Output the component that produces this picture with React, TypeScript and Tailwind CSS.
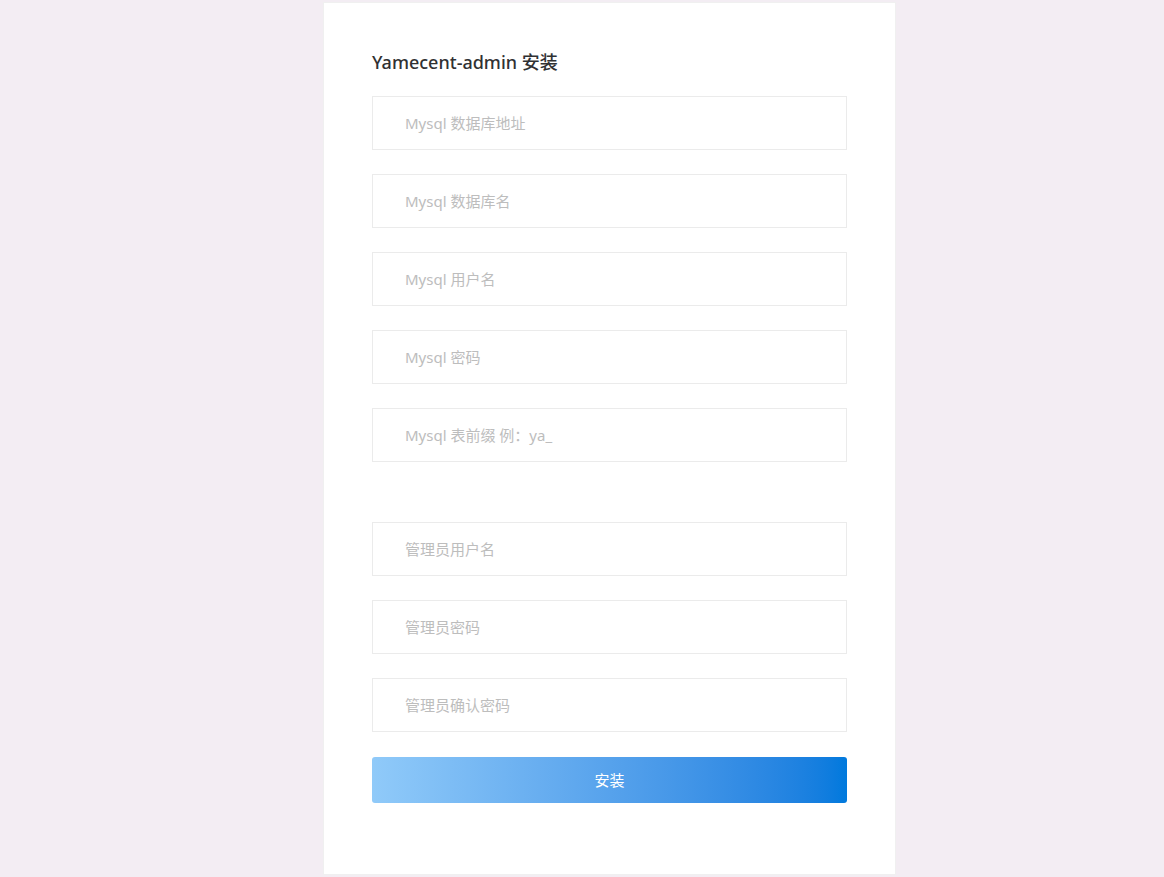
const fields = [
    'Mysql 数据库地址',
    'Mysql 数据库名',
    'Mysql 用户名',
    'Mysql 密码',
    'Mysql 表前缀 例：ya_',
];

const adminFields = ['管理员用户名', '管理员密码', '管理员确认密码'];

const Field = ({ placeholder }: { placeholder: string }) => (
    <input
        type="text"
        placeholder={placeholder}
        className="w-full h-[54px] border border-[#ebebeb] bg-white pl-8 pr-4 text-[15px] text-[#333] placeholder:text-[#bdbdbd] focus:outline-none"
    />
);

const App = () => {
    return (
        <div
            className="min-h-[877px] bg-[#f3edf3] pt-[3px] pb-[3px]"
            style={{ fontFamily: '"Noto Sans", "Noto Sans CJK SC", sans-serif' }}
        >
            <div className="ml-[324px] w-[571px] h-[871px] bg-white shadow-[0_0_0_1px_#f0f0f0] px-12 pt-[46px]">
                <h1 className="text-[18px] font-medium text-[#303133] leading-[26px]">Yamecent-admin 安装</h1>

                <div className="mt-[21px] flex flex-col gap-6">
                    {fields.map((f) => (
                        <Field key={f} placeholder={f} />
                    ))}
                </div>

                <div className="mt-[60px] flex flex-col gap-6">
                    {adminFields.map((f) => (
                        <Field key={f} placeholder={f} />
                    ))}
                </div>

                <button
                    type="button"
                    className="mt-[25px] w-full h-[46px] rounded-[3px] bg-gradient-to-r from-[#90caf9] to-[#0079dd] text-white text-[15px]"
                >
                    安装
                </button>
            </div>
        </div>
    );
};

export default App;
